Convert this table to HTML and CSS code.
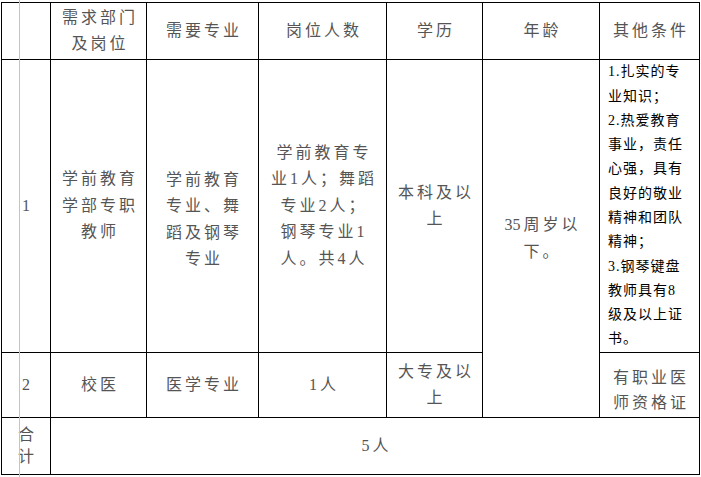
FILE: index.html
```html
<!DOCTYPE html>
<html lang="zh-CN">
<head>
<meta charset="utf-8">
<title>岗位需求表</title>
<link rel="stylesheet" href="styles.css">
</head>
<body>
<div class="page">
  <table class="jobs">
    <colgroup>
      <col class="c1"><col class="c2"><col class="c3"><col class="c4"><col class="c5"><col class="c6"><col class="c7">
    </colgroup>
    <tr class="r-head">
      <td></td>
      <td>需求部门<br>及岗位</td>
      <td>需要专业</td>
      <td>岗位人数</td>
      <td>学历</td>
      <td>年龄</td>
      <td>其他条件</td>
    </tr>
    <tr class="r-one">
      <td class="num">1</td>
      <td>学前教育<br>学部专职<br>教师</td>
      <td class="shift">学前教育<br>专业、舞<br>蹈及钢琴<br>专业</td>
      <td>学前教育专<br>业1人；舞蹈<br>专业2人；<br>钢琴专业1<br>人。共4人</td>
      <td>本科及以<br>上</td>
      <td rowspan="2"><span class="dg">3</span>5周岁以<br>下。</td>
      <td class="notes">1.扎实的专<br>业知识；<br>2.热爱教育<br>事业，责任<br>心强，具有<br>良好的敬业<br>精神和团队<br>精神；<br>3.钢琴键盘<br>教师具有8<br>级及以上证<br>书。</td>
    </tr>
    <tr class="r-two">
      <td class="num">2</td>
      <td>校医</td>
      <td>医学专业</td>
      <td>1人</td>
      <td>大专及以<br>上</td>
      <td class="tight">有职业医<br>师资格证</td>
    </tr>
    <tr class="r-sum">
      <td class="sum">合<br>计</td>
      <td colspan="6">5人</td>
    </tr>
  </table>
  <div class="guide"></div>
</div>
</body>
</html>
```

FILE: styles.css
```css
html, body {
  margin: 0;
  padding: 0;
  background: #fff;
}
.page {
  position: relative;
  width: 701px;
  height: 477px;
  overflow: hidden;
}
.jobs {
  margin: 2px 0 0 1px;
  border-collapse: collapse;
  table-layout: fixed;
  width: 698px;
  font-family: "Liberation Serif", "Noto Sans CJK SC", serif;
  font-size: 16px;
  color: #555;
}
.c1 { width: 49px; }
.c2 { width: 96px; }
.c3 { width: 112px; }
.c4 { width: 128px; }
.c5 { width: 96px; }
.c6 { width: 117px; }
.c7 { width: 100px; }
.jobs td {
  border: 1px solid #000;
  padding: 0 0 0 3px;
  text-align: center;
  vertical-align: middle;
  line-height: 26.5px;
  letter-spacing: 3px;
  white-space: nowrap;
  overflow: hidden;
}
.r-head td { height: 56px; }
.r-one td { height: 292px; }
.r-two td { height: 64px; }
.r-sum td { height: 56px; }
.jobs td.num { letter-spacing: 0; padding: 0; }
.dg { letter-spacing: 0; }
.r-one td.shift { padding-top: 27px; height: 265px; }
.jobs td.notes {
  text-align: left;
  padding: 0 0 0 8px;
  font-size: 14px;
  line-height: 24.3px;
  letter-spacing: 1px;
  color: #000;
}
.r-two td.tight { line-height: 25px; padding-top: 10px; height: 54px; }
.jobs td.sum { line-height: 22px; letter-spacing: 0; padding: 0; }
.guide {
  position: absolute;
  left: 19px;
  top: 0;
  width: 1px;
  height: 477px;
  background: #c4c4c4;
}
```
